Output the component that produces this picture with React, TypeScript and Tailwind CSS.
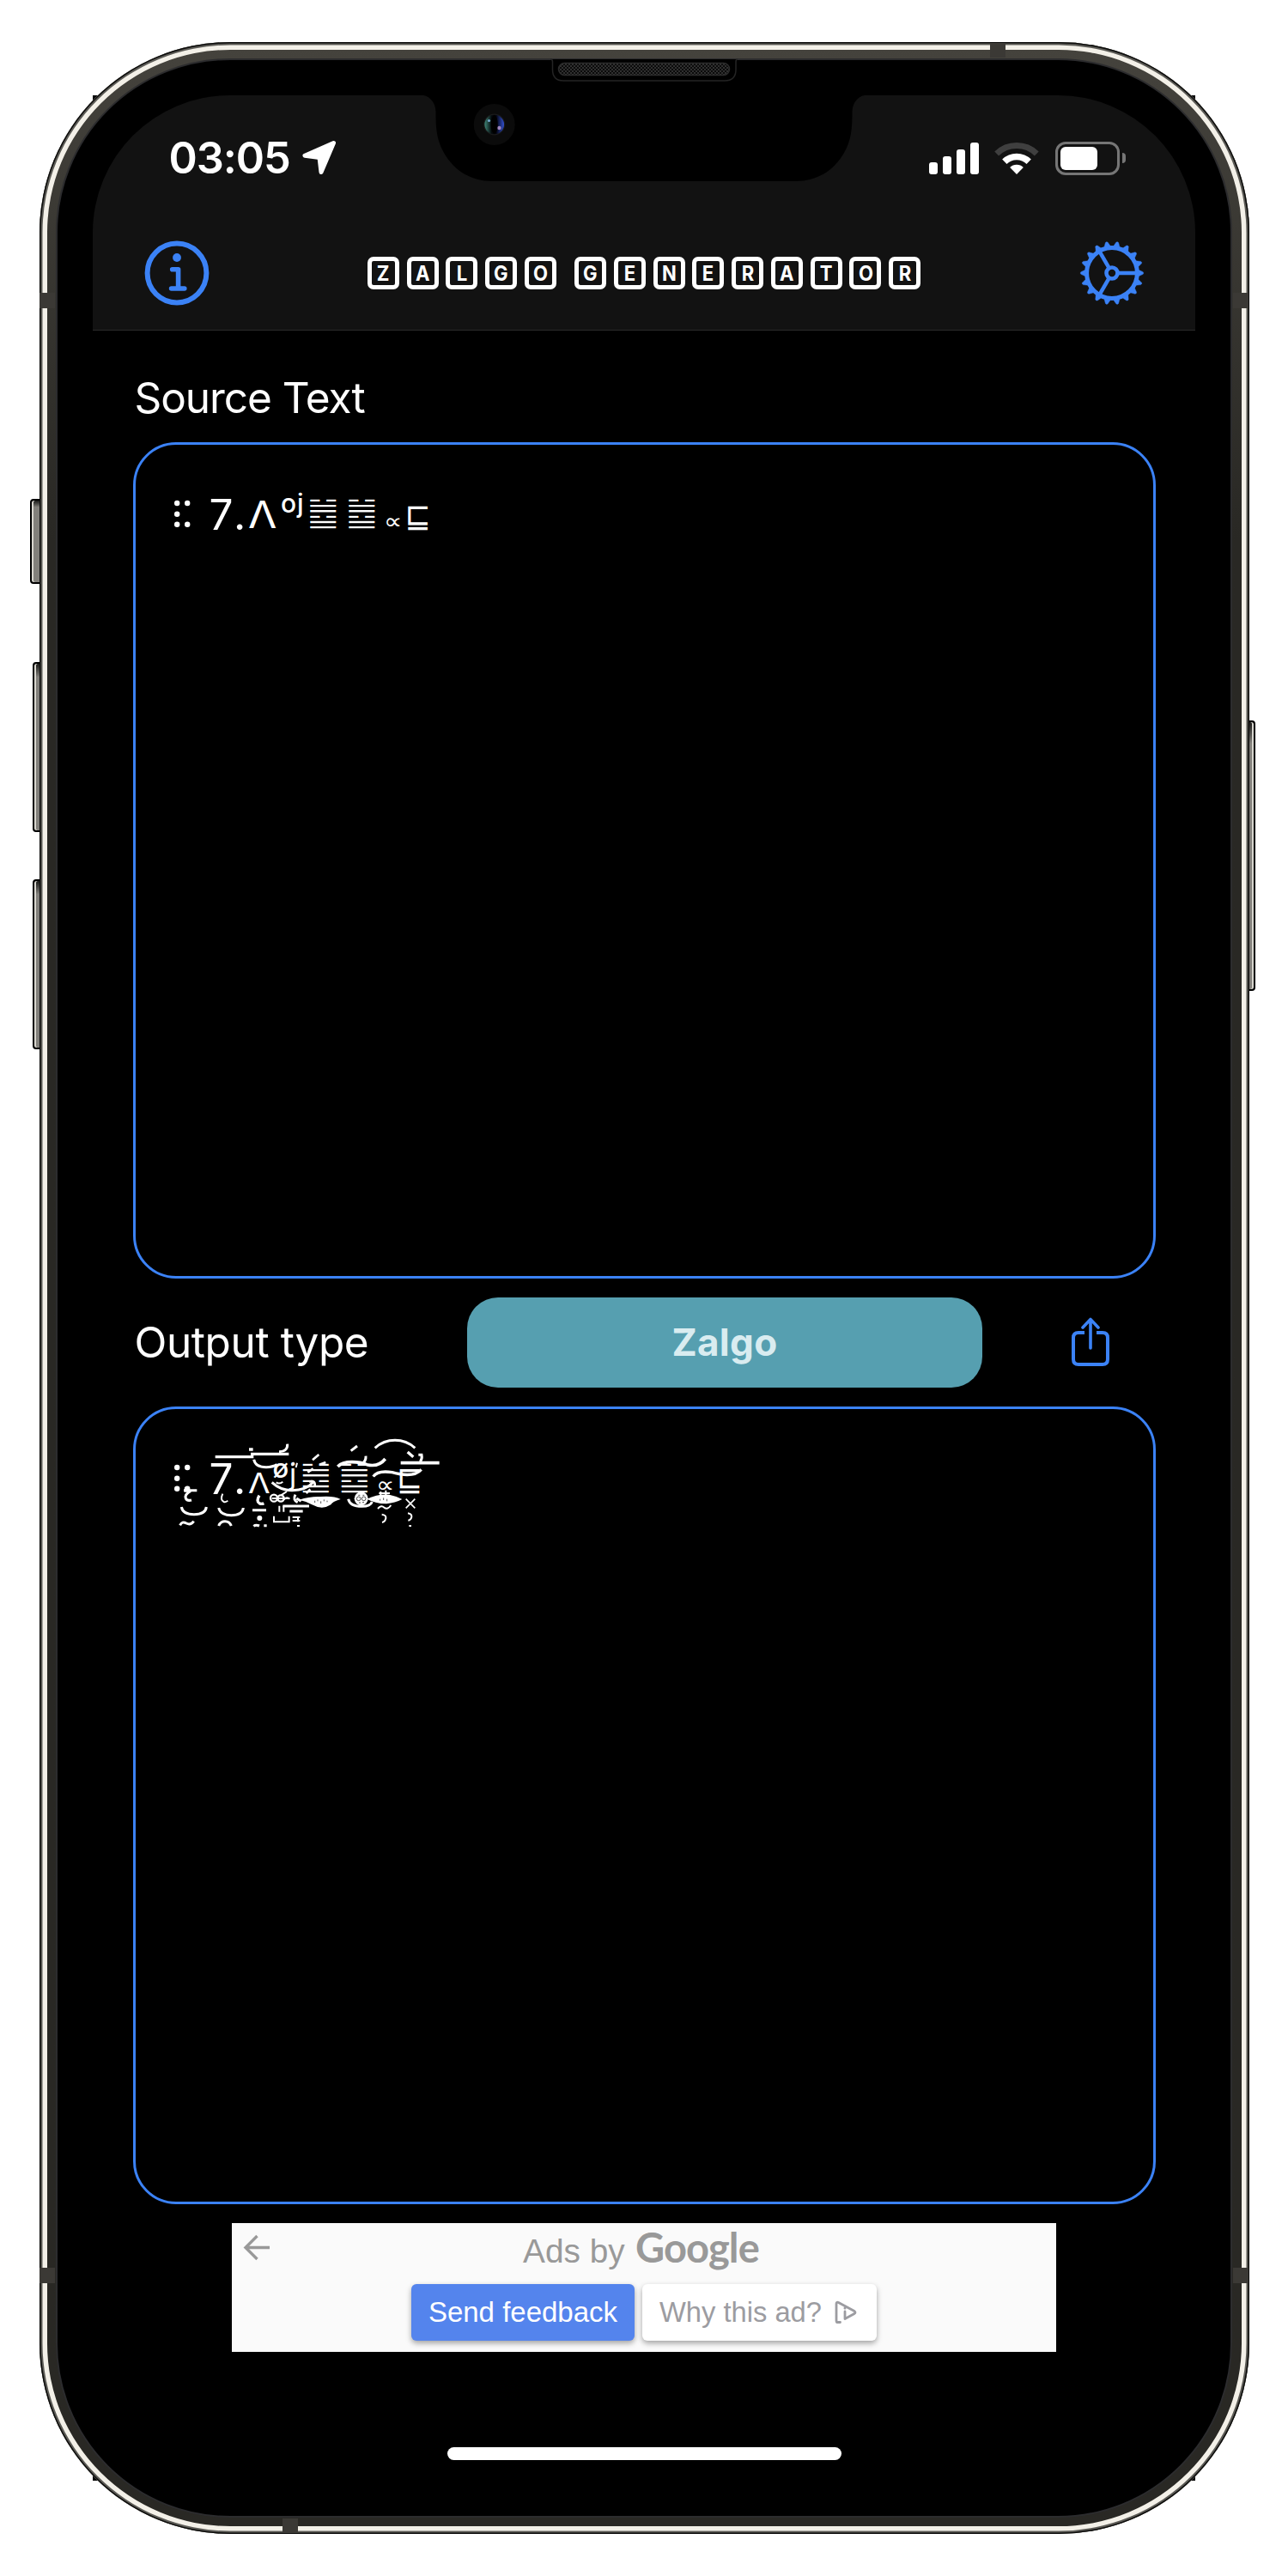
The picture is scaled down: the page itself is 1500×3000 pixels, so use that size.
import React from "react";

const BLUE = "#3b82f6";

type Glyph = {
  ch: string;
  x: number;
  y: number;
  size: number;
  sx?: number;
  sy?: number;
  kind?: "inter" | "thick" | "hexagram";
};

// x = left edge, y = baseline, both relative to the text area's outer corner.
const SOURCE: Glyph[] = [
  { ch: "7", x: 89.5, y: 103, size: 49.5, kind: "inter" },
  { ch: ".", x: 118, y: 103, size: 49.5, kind: "inter" },
  { ch: "Λ", x: 135, y: 100.5, size: 44, sx: 1.1, kind: "inter" },
  { ch: "o", x: 173, y: 82.5, size: 30, kind: "thick" },
  { ch: "j", x: 192, y: 82.5, size: 30, kind: "thick" },
  { ch: "䷹", x: 203, y: 95.5, size: 43.5, sy: 0.92, kind: "hexagram" },
  { ch: "䷹", x: 248, y: 95.5, size: 43.5, sy: 0.92, kind: "hexagram" },
  { ch: "∝", x: 292.5, y: 101, size: 26, sx: 1.15 },
  { ch: "⊑", x: 317.5, y: 100, size: 36, sy: 1.07 },
];

const OUTPUT: Glyph[] = [
  { ch: "7", x: 89.5, y: 103, size: 49.5, kind: "inter" },
  { ch: ".", x: 118, y: 103, size: 49.5, kind: "inter" },
  { ch: "Λ", x: 135, y: 102, size: 32, sx: 1.16, kind: "inter" },
  { ch: "ø", x: 163.5, y: 83, size: 31, kind: "thick" },
  { ch: "j", x: 183, y: 92, size: 34, kind: "inter" },
  { ch: "䷹", x: 194.5, y: 95.5, size: 43.5, sy: 0.92, kind: "hexagram" },
  { ch: "䷹", x: 239.5, y: 95.5, size: 43.5, sy: 0.92, kind: "hexagram" },
  { ch: "∝", x: 284, y: 100, size: 26, sx: 1.15 },
  { ch: "⊑", x: 308, y: 99.5, size: 36, sy: 1.1 },
];

function glyphClass(kind: Glyph["kind"]) {
  if (kind === "inter") return "font-['Inter',sans-serif]";
  if (kind === "thick") return "font-['Inter',sans-serif] font-medium";
  if (kind === "hexagram") return "font-['DejaVu_Sans',sans-serif] [-webkit-text-stroke:1.6px_#000]";
  return "font-['DejaVu_Sans',sans-serif]";
}

function GlyphRun({ items }: { items: Glyph[] }) {
  return (
    <div className="absolute -top-[3.5px] -left-[3.5px] text-white">
      <svg className="absolute top-[66px] left-[48px]" width="22" height="36" viewBox="0 0 22 36" fill="#fff">
        <circle cx="4.2" cy="5" r="3.2" />
        <circle cx="4.2" cy="17.7" r="3.2" />
        <circle cx="4.2" cy="29.7" r="3.2" />
        <circle cx="16.2" cy="5" r="3.2" />
        <circle cx="16.2" cy="29.7" r="3.2" />
      </svg>
      {items.map((g, i) => (
        <span
          key={i}
          className={"absolute origin-bottom-left whitespace-pre leading-none " + glyphClass(g.kind)}
          style={{
            left: g.x,
            top: g.y - g.size * (g.kind === "inter" || g.kind === "thick" ? 0.864 : 0.846),
            fontSize: g.size,
            transform: g.sx || g.sy ? `scale(${g.sx ?? 1}, ${g.sy ?? 1})` : undefined,
          }}
        >
          {g.ch}
        </span>
      ))}
    </div>
  );
}

// Stacked diacritic strokes scattered over the output characters.
function ZalgoMarks() {
  return (
    <svg
      className="absolute top-[31.8px] left-[42px]"
      width="320"
      height="106"
      viewBox="180 640 960 318"
      fill="none"
      stroke="#fff"
      strokeWidth="9"
    >
      <path d="M222 828 H268 M229 818 V834 M246 830 Q224 842 229 856 Q234 866 249 862" />
      <path d="M214 886 Q218 912 258 912 Q298 912 301 886" />
      <path d="M209 950 Q216 934 231 943 Q246 951 257 936" />
      <path d="M332 711 H466 M456 701 H589 M450 685 H464" strokeWidth="10" />
      <path d="M467 720 Q472 747 510 747 Q532 747 548 738 M555 693 Q586 692 584 666" />
      <path d="M358 840 Q348 862 362 868 Q370 870 376 864" strokeWidth="6" />
      <path d="M344 889 Q350 915 388 915 Q428 915 430 889" />
      <path d="M344 952 Q350 936 366 936 Q382 936 388 952" />
      <path d="M486 846 Q474 866 486 873 Q494 877 502 873" strokeWidth="10" />
      <path d="M462 897 H510 M466 953 Q474 947 486 952 M502 951 H512" />
      <circle cx="487" cy="925" r="9" fill="#fff" stroke="none" />
      <circle cx="537" cy="855" r="12" strokeWidth="7" />
      <circle cx="561" cy="856" r="11" strokeWidth="7" />
      <path d="M530 856 H592 M562 845 L582 832 M572 860 Q582 848 592 858" strokeWidth="6" />
      <path d="M556 882 V903 M571 882 V903 M537 918 V938 H590 V918" strokeWidth="6" />
      <path d="M568 883 H660 M592 901 H638" />
      <path d="M602 922 H628 M621 922 V938 M602 934 H628 M618 952 H627" strokeWidth="6" />
      <path d="M530 800 Q560 828 600 828 Q650 828 674 800" />
      <path d="M545 800 Q556 808 568 798 M600 742 L606 730 M614 748 L618 732" strokeWidth="6" />
      <path d="M612 843 Q602 862 620 870 M616 856 L632 866" strokeWidth="9" />
      <path d="M672 722 L694 703 M696 738 L718 730 M655 765 L674 752 M660 798 Q682 790 680 812 M650 838 L664 824" strokeWidth="8" />
      <path
        d="M625 861 Q665 848 700 850 Q745 846 770 859 Q740 868 736 878 Q706 898 670 878 Q650 866 625 861 Z"
        fill="#fff"
        stroke="none"
      />
      <path d="M680 864 V871 M690 860 V866 M701 866 V874 M712 860 V866 M723 864 V869" stroke="#000" strokeWidth="2" />
      <path d="M797 858 Q802 884 845 884 Q874 884 880 868" />
      <circle cx="842" cy="857" r="24" fill="#fff" stroke="none" />
      <circle cx="833" cy="857" r="7" stroke="#000" strokeWidth="2" />
      <circle cx="851" cy="857" r="7" stroke="#000" strokeWidth="2" />
      <path d="M832 845 H838 M847 845 H853 M834 871 H840 M846 870 H852" stroke="#000" strokeWidth="2" />
      <path d="M862 858 Q900 840 940 843 Q965 848 985 859 Q960 872 930 875 Q890 874 862 858 Z" fill="#fff" stroke="none" />
      <path d="M908 858 V864 M920 854 V862 M932 858 V866" stroke="#000" strokeWidth="2" />
      <path d="M900 892 Q912 878 922 888 Q934 897 946 880 M904 838 H942 M928 828 V850 M910 846 V832" strokeWidth="6" />
      <path d="M914 912 Q930 914 928 926 Q925 938 915 940 M1005 908 Q1019 910 1018 921 Q1015 932 1006 933 M1009 952 H1017" strokeWidth="6" />
      <path d="M998 858 L1030 890 M1030 858 L998 890" strokeWidth="5" />
      <path d="M890 680 Q920 653 960 653 Q1000 653 1030 680" />
      <path d="M806 690 L828 673 M858 708 Q860 726 842 738" />
      <path d="M760 745 Q775 729 810 729 Q840 729 862 738 Q902 748 926 718" strokeWidth="11" />
      <path d="M884 780 Q900 757 950 765 Q1025 786 1052 755" strokeWidth="10" />
      <path d="M980 732 H1115" strokeWidth="11" />
      <path d="M1004 694 L1024 711" strokeWidth="10" />
      <path d="M1042 704 H1053 Q1056 718 1048 728" strokeWidth="9" />
    </svg>
  );
}

function StatusBar() {
  return (
    <div className="flex h-[146px] items-center justify-between pl-[88.5px] pr-[81.5px] text-white">
      <div className="flex items-center">
        <span className="w-[152px] text-[50.5px] leading-none font-semibold tracking-[-1.1px]">03:05</span>
        <svg className="ml-[2.5px]" width="42" height="42" viewBox="0 0 42 42">
          <path d="M37.5 3.5 L4 18.3 L21 20.5 L23 37.5 Z" fill="#fff" stroke="#fff" strokeWidth="5" strokeLinejoin="round" />
        </svg>
      </div>
      <div className="flex items-end">
        <div className="flex items-end gap-[6px] pb-px">
          <i className="h-[14px] w-[10px] rounded-[3px] bg-white" />
          <i className="h-[21px] w-[10px] rounded-[3px] bg-white" />
          <i className="h-[29px] w-[10px] rounded-[3px] bg-white" />
          <i className="h-[37px] w-[10px] rounded-[3px] bg-white" />
        </div>
        <svg className="mb-px ml-[18px]" width="52" height="38" viewBox="-26 -38 52 38" fill="none">
          <path d="M-23.3 -24.1 A33.5 33.5 0 0 1 23.3 -24.1" stroke="#3f3f3f" strokeWidth="7" />
          <path d="M-14.2 -14.7 A20.4 20.4 0 0 1 14.2 -14.7" stroke="#fff" strokeWidth="7.6" />
          <path d="M0 0 L-7.8 -8.1 A11.3 11.3 0 0 1 7.8 -8.1 Z" fill="#fff" />
        </svg>
        <div className="ml-[19px] flex items-center gap-[3px]">
          <div className="h-[39px] w-[75px] rounded-[12px] border-[3px] border-[#767676] p-[3px]">
            <div className="h-[27px] w-[43px] rounded-[6px] bg-white" />
          </div>
          <div className="h-[12px] w-[4px] rounded-r-full bg-[#767676]" />
        </div>
      </div>
    </div>
  );
}

function Gear() {
  return (
    <svg width="76" height="76" viewBox="-38 -38 76 76" fill="none" stroke={BLUE}>
      <circle r="29.4" strokeWidth="5" />
      <circle r="6.5" strokeWidth="4.6" />
      {[0, 120, 240].map((a) => (
        <path key={a} d="M7 0 H29" strokeWidth="4.5" transform={`rotate(${a})`} />
      ))}
      {Array.from({ length: 18 }, (_, i) => (
        <path
          key={i}
          d="M31 -3.8 L36.2 -1.3 Q37.5 0 36.2 1.3 L31 3.8 Z"
          fill={BLUE}
          strokeWidth="0.4"
          transform={`rotate(${i * 20})`}
        />
      ))}
    </svg>
  );
}

function Info() {
  return (
    <svg width="76" height="76" viewBox="-38 -38 76 76" fill="none" stroke={BLUE} strokeLinecap="round">
      <circle r="34.4" strokeWidth="6" />
      <circle cy="-18" r="4.9" fill={BLUE} stroke="none" />
      <path d="M-5.3 -4.3 H1.6 V18 M-6.4 18 H8.8" strokeWidth="5.6" strokeLinejoin="round" />
    </svg>
  );
}

function Tiles({ word }: { word: string }) {
  return (
    <span className="flex gap-[8.8px]">
      {word.split("").map((c, i) => (
        <span
          key={i}
          className="flex h-[38px] w-[37px] items-center justify-center rounded-[7px] border-[5px] border-white text-[24.5px] leading-none font-bold text-white"
        >
          <span className="scale-x-90">{c}</span>
        </span>
      ))}
    </span>
  );
}

function SideButton({ cls }: { cls: string }) {
  return (
    <div
      className={
        "absolute border-[2px] border-black bg-linear-to-b from-[#1a1a18] via-[#82807b] via-8% to-[#82807b] to-92% " + cls
      }
    />
  );
}

function Hardware() {
  return (
    <>
      {/* antenna bands */}
      <div className="absolute top-[341px] left-[46px] h-[18px] w-[18px] bg-[#3b3935]" />
      <div className="absolute top-[341px] right-[46px] h-[18px] w-[18px] bg-[#3b3935]" />
      <div className="absolute top-[2641px] left-[46px] h-[18px] w-[18px] bg-[#3b3935]" />
      <div className="absolute top-[2641px] right-[46px] h-[18px] w-[18px] bg-[#3b3935]" />
      <div className="absolute top-[50px] left-[1153px] h-[17px] w-[18px] bg-[#3b3935]" />
      <div className="absolute top-[2933px] left-[329px] h-[17px] w-[18px] bg-[#3b3935]" />
      {/* notch, speaker and camera */}
      <svg className="absolute top-[66px] left-[480px]" width="540" height="150" viewBox="480 66 540 150">
        <defs>
          <pattern id="mesh" width="4" height="4" patternUnits="userSpaceOnUse">
            <rect width="4" height="4" fill="#0b0b0b" />
            <rect width="2" height="2" fill="#303030" />
            <rect x="2" y="2" width="2" height="2" fill="#303030" />
          </pattern>
          <linearGradient id="lens" x1="0" x2="1">
            <stop offset="0" stopColor="#3f8577" />
            <stop offset="0.35" stopColor="#040b0d" />
            <stop offset="0.6" stopColor="#03040f" />
            <stop offset="1" stopColor="#3350cf" />
          </linearGradient>
        </defs>
        <path
          d="M488 110 C500 111 507 118 507.5 130 C507.5 150 508.5 163 517 178 C529 199 549 211 573 211 H927 C951 211 971 199 983 178 C991.5 163 992.5 150 992.5 130 C993 118 1000 111 1012 110 Z"
          fill="#000"
        />
        <path
          d="M641 69 Q643.5 69 643.5 72 V81 Q643.5 94 656 94 H844 Q857 94 857 81 V72 Q857 69 859 69"
          fill="#000"
          stroke="#242424"
          strokeWidth="1.5"
        />
        <rect x="650.5" y="73.5" width="199" height="14" rx="7" fill="url(#mesh)" stroke="#2c2c2c" strokeWidth="1.5" />
        <circle cx="575.7" cy="145" r="24" fill="#0b0b0b" />
        <circle cx="575.7" cy="145" r="12.5" fill="#1a1a1a" />
        <circle cx="575.7" cy="145" r="11.3" fill="url(#lens)" />
        <ellipse cx="575.7" cy="145" rx="4" ry="11" fill="#000" />
        <circle cx="569.5" cy="140.5" r="1.6" fill="#75a8cf" />
        <circle cx="581.5" cy="149" r="2.2" fill="#9f86bd" />
      </svg>
    </>
  );
}

function AdBanner() {
  return (
    <div className="relative mx-auto mt-[22px] flex h-[150px] w-[960px] flex-col items-center bg-[#fafafa] font-['Liberation_Sans',Arial,sans-serif]">
      <svg className="absolute top-[13px] left-[13px]" width="32" height="32" viewBox="0 0 32 32" fill="none" stroke="#999" strokeWidth="3.4">
        <path d="M31 15.5 H3 M16.5 2 L3 15.5 L16.5 29" />
      </svg>
      <div className="flex h-[71px] items-baseline pt-[2px] pr-[7px] leading-none text-[#999]">
        <span className="w-[131px] text-[38.8px] leading-[52px]">Ads by</span>
        <span className="w-[144px] font-['Lato',sans-serif] text-[47px] leading-[52px] font-bold tracking-[-0.9px]">Google</span>
      </div>
      <div className="flex h-[66px] gap-[9px] text-[33px]">
        <div className="flex h-[66px] w-[260px] items-center justify-center rounded-[6px] bg-[#5484ed] pb-[1px] text-white shadow-[0_3px_6px_rgba(0,0,0,0.35)]">
          Send feedback
        </div>
        <div className="flex h-[66px] w-[273px] items-center rounded-[6px] bg-white pb-[1px] pl-[20px] text-[#9c9ca1] shadow-[0_3px_6px_rgba(0,0,0,0.35)]">
          <span className="text-[32.7px]">Why this ad?</span>
          <svg
            className="ml-[15px]"
            width="27"
            height="28"
            viewBox="0 0 27 28"
            fill="none"
            stroke="#9c9ca1"
            strokeWidth="2.8"
            strokeLinejoin="round"
            strokeLinecap="round"
          >
            <path d="M6.5 25.500 L3 25.500 Q2 25.500 2 23 V4 Q2 1.500 4.500 2.500 L23 12.500 Q25 14 23 15.500 L12 21.500 V13" />
            <path d="M12 9 V9.200" />
          </svg>
        </div>
      </div>
    </div>
  );
}

export default function App() {
  return (
    <div className="relative h-[3000px] w-[1500px] overflow-hidden bg-white pt-[49px] font-['Inter',sans-serif]">
      {/* square screen corners that show just outside the body */}
      <div className="absolute top-[111px] left-[108px] h-[2778px] w-[1284px] bg-[#0a0a0a]" />
      <SideButton cls="left-[35px] top-[581px] h-[99px] w-[14px] rounded-l-[4px] shadow-[inset_2px_0_0_#d8d6cf]" />
      <SideButton cls="left-[38px] top-[771px] h-[198px] w-[12px] rounded-l-[4px] shadow-[inset_2px_0_0_#d8d6cf]" />
      <SideButton cls="left-[38px] top-[1024px] h-[198px] w-[12px] rounded-l-[4px] shadow-[inset_2px_0_0_#d8d6cf]" />
      <SideButton cls="left-[1450px] top-[839px] h-[315px] w-[12px] rounded-r-[4px] shadow-[inset_-2px_0_0_#d8d6cf]" />

      <div className="relative mx-auto h-[2902px] w-[1409px] rounded-[222px] bg-linear-to-b from-[#45433d] via-[#292824] via-20% to-[#292824] px-[19.5px] py-[19px] shadow-[inset_0_0_0_1.5px_#0c0c0b,inset_0_0_0_3.5px_#5b5a55,inset_0_0_0_9px_#f3f0e8]">
        <div className="h-full rounded-[203px] border-2 border-[#2c2c2e] bg-black px-[41px] py-[41px]">
          <div className="h-[2778px] overflow-hidden rounded-[160px] bg-black">
            <div className="h-[274px] border-b border-[#2a2a2a] bg-[#121212]">
              <StatusBar />
              <div className="flex h-[122px] items-center justify-between px-[59.5px]">
                <Info />
                <div className="flex gap-[21px]">
                  <Tiles word="ZALGO" />
                  <Tiles word="GENERATOR" />
                </div>
                <Gear />
              </div>
            </div>

            <div className="px-[46.5px] pt-[26px] text-white">
              <div className="flex h-[104px] items-center pt-[2px] pl-[2px] text-[49.5px] leading-none tracking-[-1.05px]">
                Source Text
              </div>
              <div className="relative h-[974px] rounded-[50px] border-[3.5px] border-[#3b82f6]">
                <GlyphRun items={SOURCE} />
              </div>

              <div className="flex h-[149px] items-center pl-[2px]">
                <span className="w-[387.5px] pt-[1px] text-[49.5px] leading-none tracking-[-0.4px]">Output type</span>
                <div className="flex h-[105px] w-[600px] items-center justify-center rounded-[36px] bg-[#569fb0] pb-[2px] text-[44px] leading-none font-bold tracking-[0.3px] text-[#d9ecf0]">
                  Zalgo
                </div>
                <svg
                  className="mb-[1px] ml-[102px]"
                  width="48"
                  height="60"
                  viewBox="0 0 48 60"
                  fill="none"
                  stroke={BLUE}
                  strokeWidth="4"
                  strokeLinecap="round"
                  strokeLinejoin="round"
                >
                  <path d="M17 19 H10 Q4 19 4 25 V50 Q4 56 10 56 H38 Q44 56 44 50 V25 Q44 19 38 19 H31" strokeLinecap="butt" />
                  <path d="M24 37 V4 M15 13 L24 3.5 L33 13" strokeWidth="3.6" />
                </svg>
              </div>

              <div className="relative h-[929px] rounded-[50px] border-[3.5px] border-[#3b82f6]">
                <GlyphRun items={OUTPUT} />
                <ZalgoMarks />
              </div>
            </div>

            <AdBanner />
            <div className="mx-auto mt-[111px] h-[15px] w-[459px] rounded-full bg-white" />
          </div>
        </div>
      </div>
      <Hardware />
    </div>
  );
}
